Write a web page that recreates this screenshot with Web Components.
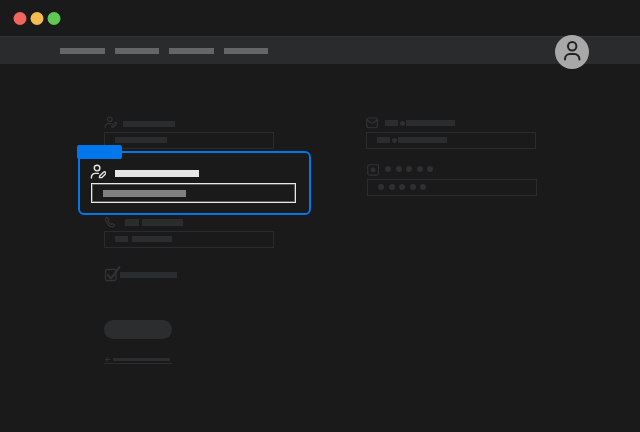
<!DOCTYPE html>
<html>
<head>
<meta charset="utf-8">
<title>Form autofill</title>
<style>
  html, body { margin: 0; height: 100%; background: #1a1a1a; font-family: "Liberation Sans", sans-serif; }
</style>
</head>
<body>
<app-window>
  <title-bar></title-bar>
  <nav-bar>
    <sk-bar style="--w:45px"></sk-bar>
    <sk-bar style="--w:44px"></sk-bar>
    <sk-bar style="--w:45px"></sk-bar>
    <sk-bar style="--w:44px"></sk-bar>
  </nav-bar>
  <form-page>
    <div slot="left">
      <form-field>
        <field-icon slot="icon" name="user"></field-icon>
        <sk-bar slot="label" style="--w:52px;--top:5px"></sk-bar>
        <sk-bar slot="value" style="--w:52px"></sk-bar>
      </form-field>
      <focus-card>
        <field-icon slot="icon" name="user" style="--size:16px"></field-icon>
        <sk-bar slot="label" style="--w:84px;--h:7px;--top:6px;--bar:#e6e6e6"></sk-bar>
        <sk-bar slot="value" style="--w:83px;--h:7px;--bar:#808080"></sk-bar>
      </focus-card>
      <form-field style="--row:15px;--before:1px;--gap:8px">
        <field-icon slot="icon" name="phone"></field-icon>
        <sk-bar slot="label" style="--w:14px;--top:3px;--h:7px"></sk-bar>
        <sk-bar slot="label" style="--w:41px;--top:3px;--h:7px"></sk-bar>
        <sk-bar slot="value" style="--w:13px"></sk-bar>
        <sk-bar slot="value" style="--w:40px"></sk-bar>
      </form-field>
      <check-row><sk-bar style="--w:57px;--top:6px"></sk-bar></check-row>
      <pill-button></pill-button>
      <back-link><sk-bar style="--w:57px;--h:3px;--top:2px"></sk-bar></back-link>
    </div>
    <div slot="right">
      <form-field style="--gap:6px;--inner:1.5px">
        <field-icon slot="icon" name="mail"></field-icon>
        <sk-bar slot="label" style="--w:13px;--top:4px"></sk-bar>
        <sk-dot slot="label" style="--top:4.5px;--d:5px"></sk-dot>
        <sk-bar slot="label" style="--w:49px;--top:4px"></sk-bar>
        <sk-bar slot="value" style="--w:13px"></sk-bar>
        <sk-dot slot="value" style="--top:.5px;--d:5px"></sk-dot>
        <sk-bar slot="value" style="--w:49px"></sk-bar>
      </form-field>
      <form-field style="--gap:5px;--inner:4.6px;--before:15px;--shift:1px;--row:15px">
        <field-icon slot="icon" name="key"></field-icon>
        <sk-dot slot="label" style="--top:2px"></sk-dot>
        <sk-dot slot="label" style="--top:2px"></sk-dot>
        <sk-dot slot="label" style="--top:2px"></sk-dot>
        <sk-dot slot="label" style="--top:2px"></sk-dot>
        <sk-dot slot="label" style="--top:2px"></sk-dot>
        <sk-dot slot="value"></sk-dot>
        <sk-dot slot="value"></sk-dot>
        <sk-dot slot="value"></sk-dot>
        <sk-dot slot="value"></sk-dot>
        <sk-dot slot="value"></sk-dot>
      </form-field>
    </div>
  </form-page>
</app-window>

<script>
  // small helper, every element has the same shadow setup
  function shadow(el, html) {
    el.attachShadow({mode: 'open'});
    el.shadowRoot.innerHTML = html;
  }

  class AppWindow extends HTMLElement {
    constructor() {
      super();
      shadow(this, `
        <style>
          :host { display: flex; flex-direction: column; width: 640px; height: 432px; overflow: hidden; background: #1a1a1a; }
        </style>
        <slot></slot>
      `);
    }
  }

  class TitleBar extends HTMLElement {
    constructor() {
      super();
      shadow(this, `
        <style>
          :host { display: block; height: 36px; padding: 12px 0 0 13px; box-sizing: border-box; }
          svg { display: block; }
        </style>
        <svg width="48" height="13" viewBox="0 0 48 13">
          <circle cx="7" cy="6.500" r="6.500" fill="#f1655f"/>
          <circle cx="24" cy="6.500" r="6.500" fill="#f5bd4f"/>
          <circle cx="41" cy="6.500" r="6.500" fill="#5fc853"/>
        </svg>
      `);
    }
  }

  class NavBar extends HTMLElement {
    constructor() {
      super();
      shadow(this, `
        <style>
          :host { display: flex; align-items: center; height: 28px; box-sizing: border-box; padding: 0 51px 0 60px; background: #2a2b2d; border-top: 1px solid #343537; --bar: #666; --h: 6px; }
          nav { display: flex; gap: 10px; }
          .avatar { margin: -3px 0 -6px auto; width: 34px; height: 34px; flex: none; }
          svg { display: block; }
        </style>
        <nav><slot></slot></nav>
        <div class="avatar">
          <svg width="34" height="34" viewBox="0 0 34 34">
            <circle cx="17" cy="17" r="17" fill="#a8a8a8"/>
            <circle cx="17.200" cy="11.200" r="4.200" fill="none" stroke="#222" stroke-width="2"/>
            <path d="M10 24.500v-.5a5 5 0 0 1 5-5h4.400a5 5 0 0 1 5 5v.5" fill="none" stroke="#222" stroke-width="2" stroke-linecap="round"/>
          </svg>
        </div>
      `);
    }
  }

  class SkBar extends HTMLElement {
    constructor() {
      super();
      shadow(this, `
        <style>
          :host { display: block; flex: none; width: var(--w, 40px); height: var(--h, 6px); margin-top: var(--top, 0); background: var(--bar, #2b2c2e); }
        </style>
      `);
    }
  }

  class SkDot extends HTMLElement {
    constructor() {
      super();
      shadow(this, `
        <style>
          :host { display: block; flex: none; width: var(--d, 6px); height: var(--d, 6px); margin-top: var(--top, 0); border-radius: 50%; background: var(--bar, #2e2f31); }
        </style>
      `);
    }
  }

  const ICONS = {
    user: `<circle cx="7.500" cy="4.300" r="3"/><path d="M1.500 15v-1a4 4 0 0 1 4-4h3.500"/><path d="M10 14.500l.4-2 4-3.800a1.400 1.400 0 0 1 2 2l-4 3.800z"/>`,
    phone: `<path d="M2 3.200l2-1.700 2.500 3.500-1.500 1.500c.7 2 2.200 3.600 4.300 4.600l1.500-1.300 3.200 2.400-2 2C7.500 15 1.800 9.200 2 3.200z"/>`,
    mail: `<rect x="1" y="2.600" width="14" height="12.800" rx="3"/><path d="M2 5.500l6 4.500 6-4.500"/>`,
    key: `<rect x="1" y="1" width="14" height="13.500" rx="2"/><path d="M8 4.800v6M5.400 6.300l5.200 3M10.600 6.300l-5.200 3"/>`
  };

  class FieldIcon extends HTMLElement {
    constructor() {
      super();
      shadow(this, `
        <style>
          :host { display: block; flex: none; width: var(--size, 13px); height: var(--size, 13px); color: var(--ink, #323337); }
          svg { display: block; width: 100%; height: 100%; fill: none; stroke: currentColor; stroke-width: 1.500; stroke-linecap: round; stroke-linejoin: round; }
        </style>
        <svg viewBox="0 0 17 17">${ICONS[this.getAttribute('name')] || ''}</svg>
      `);
    }
  }

  class FormField extends HTMLElement {
    constructor() {
      super();
      shadow(this, `
        <style>
          :host { display: block; margin-top: var(--before, 0); margin-left: var(--shift, 0); }
          .row { display: flex; height: var(--row, 16px); gap: var(--gap, 6px); }
          .row .lab { display: flex; gap: var(--inner, 3px); }
          .box { display: flex; gap: var(--inner, 4px); box-sizing: border-box; width: 170px; height: 17px; padding: 4px 10px; border: 1px solid #2a2b2d; }
        </style>
        <div class="row"><slot name="icon"></slot><div class="lab"><slot name="label"></slot></div></div>
        <div class="box"><slot name="value"></slot></div>
      `);
    }
  }

  class FocusCard extends HTMLElement {
    constructor() {
      super();
      shadow(this, `
        <style>
          :host { display: block; position: relative; box-sizing: border-box; width: 233px; height: 64px; margin: 2px 0 0 -26px; padding: 11px 13px 0 10px; border: 2px solid #0077ea; border-radius: 6px; background: #1a1a1a; --ink: #e6e6e6; }
          .tag { position: absolute; left: -3px; top: -8px; width: 45px; height: 13.500px; background: #0077ea; border-radius: 2px; }
          .row { display: flex; height: 19px; gap: 9px; }
          .box { display: flex; box-sizing: border-box; width: 205px; height: 20px; margin-left: 1px; padding: 6px 11px; border: 1px solid #e8e8e8; box-shadow: inset 0 0 0 1px #5a5a5a; }
        </style>
        <div class="tag"></div>
        <div class="row"><slot name="icon"></slot><slot name="label"></slot></div>
        <div class="box"><slot name="value"></slot></div>
      `);
    }
  }

  class CheckRow extends HTMLElement {
    constructor() {
      super();
      shadow(this, `
        <style>
          :host { display: flex; height: 16px; margin-top: 18px; gap: 0; }
          svg { display: block; flex: none; overflow: visible; fill: none; stroke: #323337; stroke-linecap: round; stroke-linejoin: round; }
        </style>
        <svg width="16" height="16" viewBox="0 0 16 16">
          <rect x="1.500" y="3.500" width="10.500" height="11" rx="1.500" stroke-width="1.300"/>
          <path d="M4 9l3 3.500L15.500 1" stroke-width="2"/>
        </svg>
        <slot></slot>
      `);
    }
  }

  class PillButton extends HTMLElement {
    constructor() {
      super();
      shadow(this, `
        <style>
          :host { display: block; width: 68px; height: 19px; margin-top: 38px; border-radius: 10px; background: #2c2d2f; }
        </style>
      `);
    }
  }

  class BackLink extends HTMLElement {
    constructor() {
      super();
      shadow(this, `
        <style>
          :host { display: flex; gap: 3px; box-sizing: border-box; width: 68px; height: 8px; margin-top: 17px; border-bottom: 1px solid #2a2b2d; }
          svg { display: block; flex: none; fill: none; stroke: #2f3032; stroke-width: 1; }
        </style>
        <svg width="6" height="7" viewBox="0 0 6 7"><path d="M4 1L1.500 3.500 4 6M1.500 3.500H6"/></svg>
        <slot></slot>
      `);
    }
  }

  class FormPage extends HTMLElement {
    constructor() {
      super();
      shadow(this, `
        <style>
          :host { display: grid; grid-template-columns: 170px 170px; column-gap: 92px; padding: 52px 0 0 104px; }
        </style>
        <slot name="left"></slot>
        <slot name="right"></slot>
      `);
    }
  }

  customElements.define('app-window', AppWindow);
  customElements.define('title-bar', TitleBar);
  customElements.define('nav-bar', NavBar);
  customElements.define('sk-bar', SkBar);
  customElements.define('sk-dot', SkDot);
  customElements.define('field-icon', FieldIcon);
  customElements.define('form-field', FormField);
  customElements.define('focus-card', FocusCard);
  customElements.define('check-row', CheckRow);
  customElements.define('pill-button', PillButton);
  customElements.define('back-link', BackLink);
  customElements.define('form-page', FormPage);
</script>
</body>
</html>
